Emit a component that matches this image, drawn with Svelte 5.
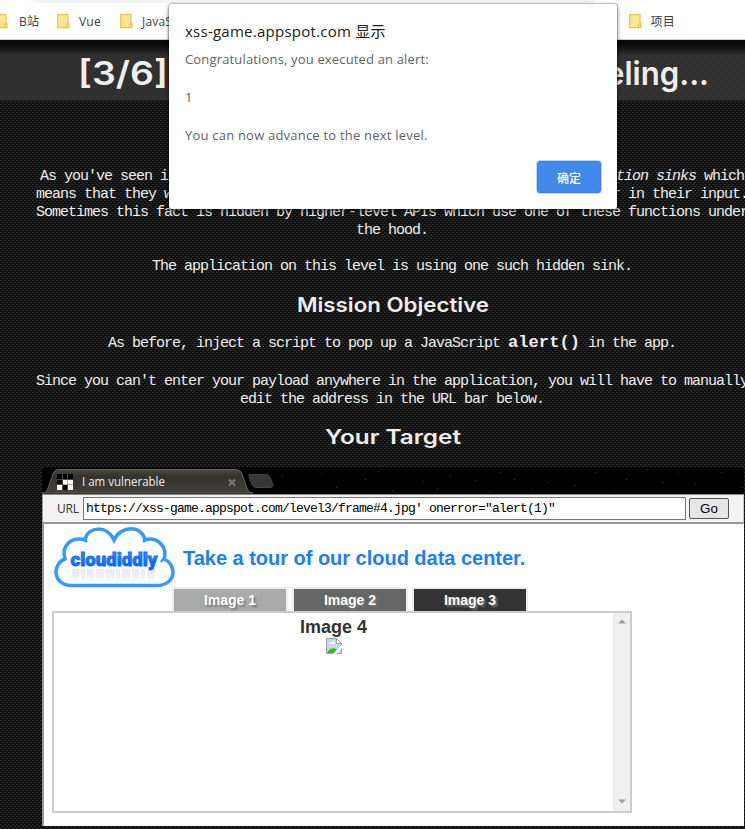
<script>
  const tabs = [
    { label: 'Image 1', color: '#aaaaaa' },
    { label: 'Image 2', color: '#666666' },
    { label: 'Image 3', color: '#333333' }
  ];
  const stars = [
    [8, 9], [20, 22], [47, 6], [62, 20], [91, 12], [104, 4], [118, 23], [149, 14], [163, 21],
    [176, 8], [201, 13], [215, 24], [226, 5], [240, 12], [258, 21], [273, 15], [301, 18],
    [321, 5], [340, 22], [352, 12], [373, 2], [389, 15], [404, 6], [421, 17], [447, 5], [468, 20]
  ];
</script>

{#snippet folder()}
  <svg class="folder" width="13" height="15" viewBox="0 0 13 15">
    <path d="M.7.7h10.300v9.200h1v3.700H.7z" fill="#ffe694" stroke="#e8c547" stroke-width="1.200" />
    <path d="M9.500 13.500v-3l1.500-1" fill="none" stroke="#e8c547" />
  </svg>
{/snippet}

{#snippet heading(text, width)}
  <svg class="heading" {width} height="26">
    <text x="0" y="20" textLength={width} lengthAdjust="spacingAndGlyphs">{text}</text>
  </svg>
{/snippet}

<div class="screen">
  <div class="bookmarks">
    <div class="omnibox"></div>
    <div class="mark first">{@render folder()}<span>B站</span></div>
    <div class="mark second">{@render folder()}<span>Vue</span></div>
    <div class="mark third">{@render folder()}<span>JavaScript</span></div>
    <div class="mark last">{@render folder()}<span>项目</span></div>
  </div>

  <header>
    <svg width="745" height="60">
      <text x="78" y="45" textLength="90" lengthAdjust="spacingAndGlyphs">[3/6]</text>
      <text x="188" y="45" textLength="415" lengthAdjust="spacingAndGlyphs">Level 3: That sinking fe</text>
      <text x="606" y="45" textLength="103" lengthAdjust="spacingAndGlyphs">eling...</text>
    </svg>
  </header>

  <main>
    <p class="intro">
      As you've seen in the previous level, some common JS functions are <i>execution sinks</i> which<br />
      means that they will cause the browser to execute any scripts that appear in their input.<br />
      Sometimes this fact is hidden by higher-level APIs which use one of these functions under<br />
      the hood.
    </p>
    <p class="sink">The application on this level is using one such hidden sink.</p>
    {@render heading('Mission Objective', 192)}
    <p class="objective">As before, inject a script to pop up a JavaScript <b>alert()</b> in the app.</p>
    <p class="payload">
      Since you can't enter your payload anywhere in the application, you will have to manually<br />
      edit the address in the URL bar below.
    </p>
    {@render heading('Your Target', 136)}
  </main>

  <section class="window">
    <div class="tabstrip">
      <svg width="702" height="27" viewBox="0 0 702 27">
        <defs>
          <linearGradient id="tab" x2="0" y2="1">
            <stop offset="0" stop-color="#494842" />
            <stop offset=".3" stop-color="#33322d" />
            <stop offset="1" stop-color="#41403a" />
          </linearGradient>
        </defs>
        {#each stars as [x, y]}
          <rect x={x + 232} {y} width="1" height="1" fill="#34343a" />
        {/each}
        <path d="M0 26c4 0 5-2 6-5l5-14c1-3 3-4.500 6-4.500h176c4 0 6 1.500 7 4.500l5 14c1 3 3 5 6 5z" fill="url(#tab)" stroke="#65635c" />
        <path d="M207 7.500h16c3 0 4 1 5 3l3 7c0 2-1 3-3 3h-13c-3 0-4-1-5-3l-3-8z" fill="#363636" stroke="#444" />
        <rect x="15" y="7" width="16" height="16" fill="#000" />
        <path d="M21 13h10v10h-5v-5h-5zM15 18h5v5h-5z" fill="#fff" />
        <path d="M20.500 7v16M25.500 7v16M15 12.500h16M15 17.500h16" stroke="#777" stroke-width=".6" />
        <path d="M187 12.500l6 6M193 12.500l-6 6" stroke="#77756e" stroke-width="2.400" />
        <text class="tabtitle" x="40" y="19" textLength="83" lengthAdjust="spacingAndGlyphs">I am vulnerable</text>
      </svg>
    </div>
    <div class="urlbar">
      <label for="url">URL</label>
      <div class="url" id="url">https://xss-game.appspot.com/level3/frame#4.jpg' onerror="alert(1)"</div>
      <button class="go">Go</button>
    </div>
    <div class="frame">
      <div class="brand">
        <svg width="122" height="64" viewBox="0 0 122 64">
          <defs>
            <linearGradient id="ink" x2="0" y2="1">
              <stop offset="0" stop-color="#3a96ff" />
              <stop offset="1" stop-color="#0057f5" />
            </linearGradient>
            <linearGradient id="mirror" x2="0" y2="1">
              <stop offset="0" stop-color="#e3e9fd" />
              <stop offset=".6" stop-color="#eef2fe" />
              <stop offset="1" stop-color="#fcfdff" />
            </linearGradient>
          </defs>
          <path d="M18 59.500H104C113 59.500 120 54 120 46C120 40 116 35 111 33C115 21 104 10 92 14C89 -1 68 -1 61 14C54 -1 35 0 32 14C18 10 8 20 12 33C6 35 3 41 3 46C3 54 10 59.500 18 59.500Z" fill="#fff" stroke="#3399ff" stroke-width="3.500" />
          <path d="M61 14v2M32 14l2 2M92 14l-2 2M11 33h2M110 33l-2 3" stroke="#3399ff" stroke-width="2.500" />
          <g class="reflection">
            {#each [19, 28, 34, 43, 53, 63, 69, 79, 88, 94] as x, i}
              <rect {x} y={43} width={[7, 4, 7, 8, 8, 4, 8, 7, 4, 8][i]} height="13" fill="url(#mirror)" />
            {/each}
          </g>
          <text class="logo" x="17.500" y="40" textLength="87" lengthAdjust="spacingAndGlyphs" fill="url(#ink)" stroke="#0b6bff" stroke-width=".8">cloudiddly</text>
        </svg>
        <h2>Take a tour of our cloud data center.</h2>
      </div>
      <div class="tabs">
        {#each tabs as tab}
          <div class="tab" style="background: {tab.color}">{tab.label}</div>
        {/each}
      </div>
      <div class="viewer">
        <div class="content">
          <div class="caption">Image 4</div>
          <svg width="16" height="16" viewBox="0 0 16 16">
            <path d="M.5.500h10l5 5v10H.5z" fill="#c3d5f5" stroke="#a0a0a0" />
            <path d="M3 6c0-2 2-2 2.500-1.500C6 2.500 9 3 8.500 5c1 0 1 1 0 1z" fill="#fff" />
            <path d="M1 15c2-5 7-6 10-3l-3 3z" fill="#4caf32" />
            <path d="M10.500.500v5h5z" fill="#fff" stroke="#a0a0a0" />
            <path d="M7 16l9-9v3l-6 6z" fill="#fff" />
          </svg>
        </div>
        <div class="scrollbar">
          <svg width="8" height="5"><path d="M0 4.500h8L4 .5z" fill="#a0a0a0" /></svg>
          <svg width="8" height="5"><path d="M0 .5h8L4 4.500z" fill="#a0a0a0" /></svg>
        </div>
      </div>
    </div>
  </section>

  <div class="dialog">
    <div class="origin">xss-game.appspot.com <span>显示</span></div>
    <div class="message">Congratulations, you executed an alert:<br /><br />1<br /><br /><span>You can now advance to the next level.</span></div>
    <button class="ok">确定</button>
  </div>
</div>

<style>
  :global(body) {
    margin: 0;
  }
  .screen {
    position: relative;
    width: 745px;
    height: 829px;
    overflow: hidden;
    background: conic-gradient(from 0deg at 2px 1px, transparent 75%, #2d2d2d 0) 0 0 / 4px 4px,
      conic-gradient(from 0deg at 2px 1px, transparent 75%, #2d2d2d 0) 2px 2px / 4px 4px #111;
  }
  .bookmarks {
    position: relative;
    display: flex;
    height: 40px;
    box-sizing: border-box;
    background: #fff;
    border-bottom: 1px solid #cfcfcf;
    font: 12px/18px "Open Sans", "Noto Sans CJK SC", sans-serif;
    letter-spacing: 0.200px;
    color: #3c4043;
  }
  .omnibox {
    position: absolute;
    left: 24px;
    top: -25px;
    width: 577px;
    height: 28px;
    border-radius: 14px;
    background: #f1f3f4;
  }
  .mark {
    display: flex;
    align-items: flex-start;
    padding-top: 13px;
    box-sizing: border-box;
    flex: none;
    gap: 9px;
  }
  .mark span {
    line-height: 18px;
  }
  .folder {
    flex: none;
    margin-top: 1px;
  }
  .first {
    width: 62px;
    margin-left: -5px;
    gap: 11px;
  }
  .second {
    width: 63px;
  }
  .third {
    width: 508.500px;
  }
  header {
    height: 61px;
    background:
      linear-gradient(#0a0a0a 0, #0a0a0a 5px, rgba(10, 10, 10, 0) 16px),
      repeating-linear-gradient(135deg, #343434 0 2px, #2c2c2c 2px 2.830px);
    border-bottom: 1px solid #222;
    box-sizing: border-box;
  }
  header svg {
    display: block;
  }
  header text {
    font: 600 33px Inter, sans-serif;
    fill: #eee;
  }
  main {
    display: flex;
    flex-direction: column;
    align-items: center;
    width: 710px;
    margin-left: 36px;
    height: 365px;
    padding-top: 67px;
    box-sizing: border-box;
    color: #eee;
    font: 15px/18px "Liberation Mono", monospace;
    letter-spacing: -1px;
    text-align: center;
    white-space: nowrap;
  }
  p {
    margin: 0;
    padding-left: 2px;
  }
  .intro {
    margin-bottom: 18px;
  }
  .sink {
    margin-bottom: 16px;
  }
  .heading {
    flex: none;
    margin-left: 4px;
    letter-spacing: 0;
  }
  .heading text {
    font: 600 20px Inter, sans-serif;
    fill: #eee;
  }
  .objective {
    margin-top: 16px;
  }
  .objective b {
    font-size: 17px;
    line-height: 18px;
    letter-spacing: 0.100px;
  }
  .payload {
    margin: 20px 0 15px;
  }
  .window {
    width: 702px;
    margin-left: 42px;
    margin-top: 1px;
  }
  .tabstrip {
    height: 27px;
    background: #000;
    border-radius: 5px 5px 0 0;
  }
  .tabstrip svg {
    display: block;
  }
  .tabtitle {
    font: 12.500px "Open Sans", sans-serif;
    fill: #eee;
  }
  .urlbar {
    display: flex;
    align-items: center;
    height: 30px;
    box-sizing: border-box;
    border-top: 1px solid #888;
    border-bottom: 2px solid #999;
    border-left: 1px solid #999;
    border-right: 1px solid #ccc;
    background: #f4f4f4;
    padding-left: 14px;
  }
  label {
    width: 26px;
    font: 12px "Open Sans", sans-serif;
    letter-spacing: -0.200px;
    color: #333;
  }
  .url {
    width: 603px;
    height: 23px;
    box-sizing: border-box;
    border: 1px solid #767676;
    background: #fff;
    padding-left: 2px;
    font: 13px/22px "Liberation Mono", monospace;
    letter-spacing: -0.800px;
    color: #000;
    white-space: nowrap;
  }
  .go {
    margin: 0 0 0 3px;
    width: 40px;
    height: 21px;
    padding: 0;
    border: 1px solid #555;
    border-radius: 2px;
    background: #e6e6e6;
    font: 13.330px "Liberation Sans", sans-serif;
    color: #000;
  }
  .frame {
    height: 302px;
    box-sizing: border-box;
    background: #fff;
    border-left: 2px solid #999;
    padding-left: 8px;
    font-family: "Liberation Sans", sans-serif;
  }
  .brand {
    display: flex;
    height: 63px;
    padding-left: 1px;
    padding-top: 1px;
    box-sizing: border-box;
  }
  .brand svg {
    flex: none;
    margin-top: 1px;
  }
  .logo {
    font: 900 18px Roboto, sans-serif;
  }
  h2 {
    margin: 21px 0 0 8px;
    font-size: 20px;
    line-height: 24px;
    letter-spacing: -0.020px;
    color: #1a7dff;
    white-space: nowrap;
  }
  .tabs {
    display: flex;
    gap: 4px;
    margin-left: 120px;
  }
  .tab {
    width: 116px;
    height: 24px;
    box-sizing: border-box;
    border: 2px solid #eee;
    border-bottom: 0;
    color: #fff;
    font: bold 14px/22px "Liberation Sans", sans-serif;
    text-align: center;
    text-shadow: 2px 2px 2px #777;
  }
  .viewer {
    display: flex;
    width: 580px;
    height: 202px;
    box-sizing: border-box;
    border: 2px solid #ccc;
  }
  .content {
    flex: 1;
    display: flex;
    flex-direction: column;
    align-items: center;
  }
  .caption {
    margin-top: 4px;
    font: bold 18px/21px "Liberation Sans", sans-serif;
    color: #333;
  }
  .scrollbar {
    width: 17px;
    display: flex;
    flex-direction: column;
    justify-content: space-between;
    align-items: center;
    background: #f0f0f0;
    padding: 6px 0 7px;
    box-sizing: border-box;
  }
  .dialog {
    position: absolute;
    left: 169px;
    top: 4px;
    width: 448px;
    height: 205px;
    box-sizing: border-box;
    padding: 17px 16px 0;
    border-radius: 3px;
    background: #fff;
    box-shadow: 0 0 1px 1px rgba(0, 0, 0, 0.200), 0 2px 5px rgba(0, 0, 0, 0.500);
    font-family: "Open Sans", "Noto Sans CJK SC", sans-serif;
    white-space: nowrap;
  }
  .origin {
    font-size: 15px;
    line-height: 20px;
    letter-spacing: 0.250px;
    color: #202124;
  }
  .message {
    margin-top: 9px;
    font-size: 13px;
    line-height: 19px;
    letter-spacing: 0.160px;
    color: #5f6368;
  }
  .message span {
    letter-spacing: 0.210px;
  }
  .ok {
    position: absolute;
    right: 16px;
    bottom: 16px;
    width: 64px;
    height: 32px;
    padding: 0;
    border: 1px solid #3a7fe0;
    border-radius: 3px;
    background: #4289eb;
    box-shadow: 0 0 0 1px #c0d9fa;
    color: #fff;
    font: 500 12px "Noto Sans CJK SC", sans-serif;
  }
</style>
